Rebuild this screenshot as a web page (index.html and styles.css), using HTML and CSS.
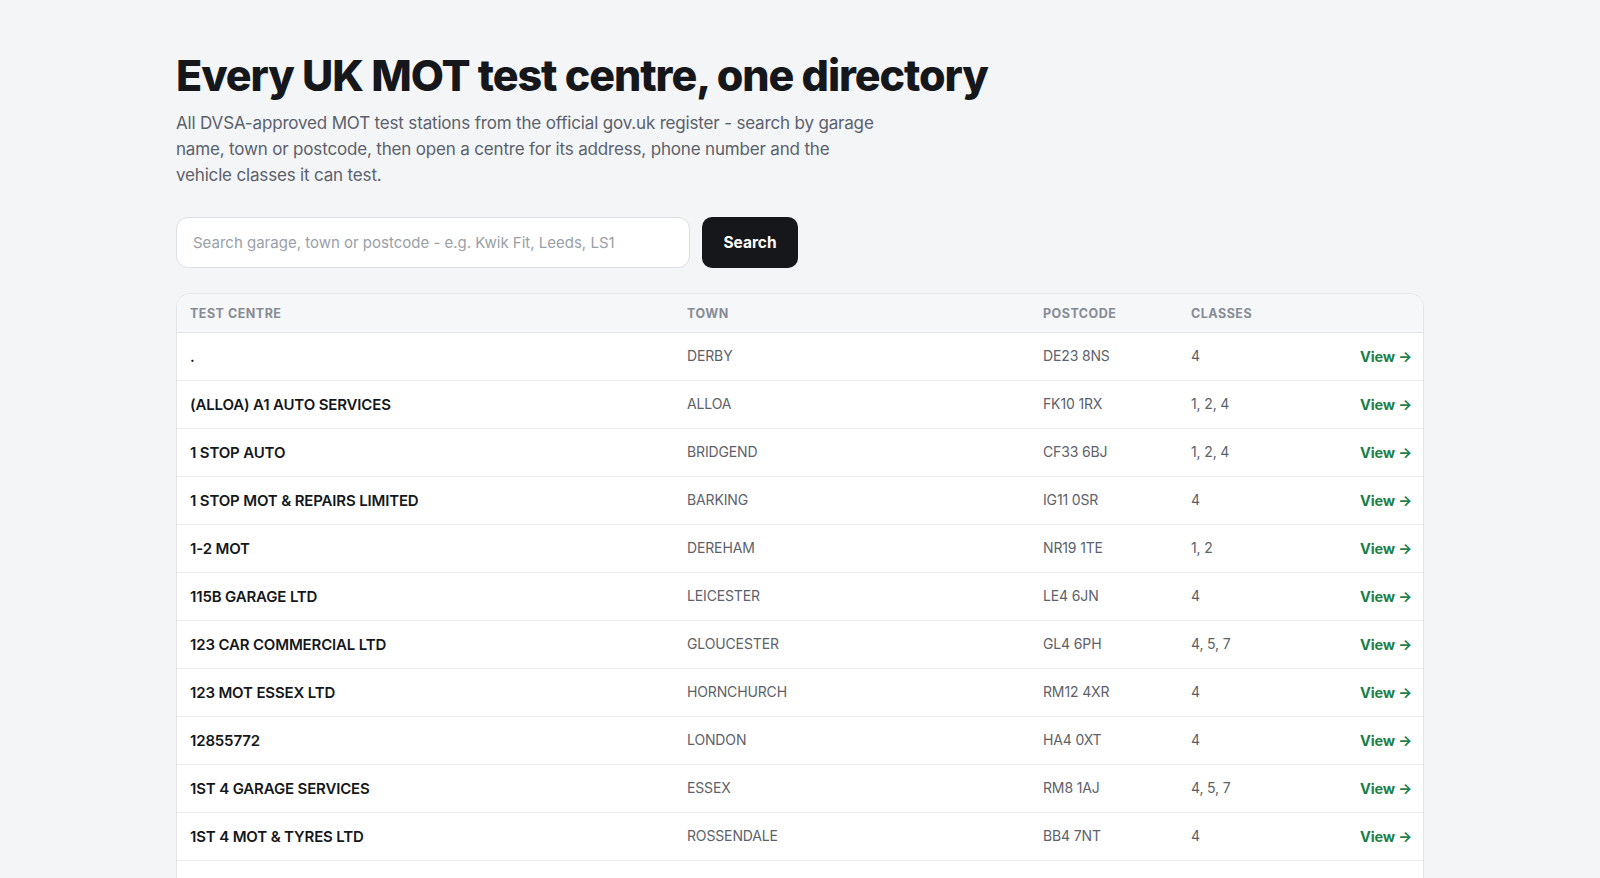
FILE: index.html
```html
<!DOCTYPE html>
<html lang="en">
<head>
    <meta charset="UTF-8">
    <title>MOT Test Centre Directory</title>
    <link rel="stylesheet" href="styles.css">
</head>
<body>

<main class="page">
    <h1 class="title">Every UK MOT test centre, one directory</h1>
    <p class="intro">All DVSA-approved MOT test stations from the official gov.uk register - search by garage name, town or postcode, then open a centre for its address, phone number and the vehicle classes it can test.</p>

    <form class="search" onsubmit="return false">
        <input type="text" class="search-input" placeholder="Search garage, town or postcode - e.g. Kwik Fit, Leeds, LS1">
        <button type="submit" class="search-btn">Search</button>
    </form>

    <div class="table-wrap">
        <table class="centres">
            <colgroup>
                <col class="col-name">
                <col class="col-town">
                <col class="col-postcode">
                <col class="col-classes">
                <col class="col-view">
            </colgroup>
            <thead>
                <tr>
                    <th>Test centre</th>
                    <th>Town</th>
                    <th>Postcode</th>
                    <th>Classes</th>
                    <th></th>
                </tr>
            </thead>
            <tbody>
                <tr><td class="name">.</td><td>DERBY</td><td>DE23 8NS</td><td>4</td><td class="view"><a href="#">View &rarr;</a></td></tr>
                <tr><td class="name">(ALLOA) A1 AUTO SERVICES</td><td>ALLOA</td><td>FK10 1RX</td><td>1, 2, 4</td><td class="view"><a href="#">View &rarr;</a></td></tr>
                <tr><td class="name">1 STOP AUTO</td><td>BRIDGEND</td><td>CF33 6BJ</td><td>1, 2, 4</td><td class="view"><a href="#">View &rarr;</a></td></tr>
                <tr><td class="name">1 STOP MOT &amp; REPAIRS LIMITED</td><td>BARKING</td><td>IG11 0SR</td><td>4</td><td class="view"><a href="#">View &rarr;</a></td></tr>
                <tr><td class="name">1-2 MOT</td><td>DEREHAM</td><td>NR19 1TE</td><td>1, 2</td><td class="view"><a href="#">View &rarr;</a></td></tr>
                <tr><td class="name">115B GARAGE LTD</td><td>LEICESTER</td><td>LE4 6JN</td><td>4</td><td class="view"><a href="#">View &rarr;</a></td></tr>
                <tr><td class="name">123 CAR COMMERCIAL LTD</td><td>GLOUCESTER</td><td>GL4 6PH</td><td>4, 5, 7</td><td class="view"><a href="#">View &rarr;</a></td></tr>
                <tr><td class="name">123 MOT ESSEX LTD</td><td>HORNCHURCH</td><td>RM12 4XR</td><td>4</td><td class="view"><a href="#">View &rarr;</a></td></tr>
                <tr><td class="name">12855772</td><td>LONDON</td><td>HA4 0XT</td><td>4</td><td class="view"><a href="#">View &rarr;</a></td></tr>
                <tr><td class="name">1ST 4 GARAGE SERVICES</td><td>ESSEX</td><td>RM8 1AJ</td><td>4, 5, 7</td><td class="view"><a href="#">View &rarr;</a></td></tr>
                <tr><td class="name">1ST 4 MOT &amp; TYRES LTD</td><td>ROSSENDALE</td><td>BB4 7NT</td><td>4</td><td class="view"><a href="#">View &rarr;</a></td></tr>
                <tr><td class="name">1st Aid 2 Car Repairs Ltd</td><td>STANLEY</td><td>DH9 7PH</td><td>4, 5, 7</td><td class="view"><a href="#">View &rarr;</a></td></tr>
            </tbody>
        </table>
    </div>
</main>

</body>
</html>
```

FILE: styles.css
```css
body {
    margin: 0;
    background: #f4f5f7;
    font-family: Inter, "Noto Sans", sans-serif;
    color: #14161a;
}
.page {
    width: 1248px;
    margin: 0 auto;
    padding-top: 49px;
}
.title {
    margin: 0;
    font-size: 43px;
    font-weight: 800;
    letter-spacing: -0.025em;
    line-height: 52px;
    color: #15171b;
}
.intro {
    margin: 9px 0 0;
    max-width: 710px;
    font-size: 17px;
    line-height: 26px;
    color: #5b616b;
    letter-spacing: -0.01em;
}
.search {
    display: flex;
    gap: 12px;
    margin-top: 29px;
}
.search-input {
    width: 514px;
    height: 51px;
    box-sizing: border-box;
    padding: 0 16px;
    border: 1px solid #dcdfe4;
    border-radius: 12px;
    background: #fff;
    font-family: inherit;
    font-size: 15px;
    color: #14161a;
}
.search-input::placeholder {
    color: #9aa0a8;
}
.search-btn {
    width: 96px;
    height: 51px;
    border: 0;
    border-radius: 10px;
    background: #15171b;
    color: #fff;
    font-family: inherit;
    font-size: 15.5px;
    font-weight: 700;
    cursor: pointer;
}
.table-wrap {
    margin-top: 25px;
    border: 1px solid #e3e5e9;
    border-radius: 14px;
    overflow: hidden;
    background: #fff;
}
.centres {
    width: 100%;
    border-collapse: collapse;
    table-layout: fixed;
}
.col-name { width: 497px; }
.col-town { width: 356px; }
.col-postcode { width: 148px; }
.col-classes { width: 127px; }
.col-view { width: 120px; }
.centres th {
    background: #f6f7f9;
    height: 38px;
    padding: 0 13px;
    text-align: left;
    font-size: 12.5px;
    font-weight: 700;
    letter-spacing: 0.04em;
    text-transform: uppercase;
    color: #878c94;
    border-bottom: 1px solid #e3e5e9;
}
.centres td {
    height: 44px;
    padding: 0 13px 3px;
    font-size: 14px;
    color: #5d626a;
    border-bottom: 1px solid #eceef1;
    letter-spacing: -0.01em;
}
.centres td.name {
    font-size: 15px;
    font-weight: 600;
    color: #15171b;
    padding: 0 13px;
}
.centres td.view {
    text-align: right;
    padding: 0 13px;
}
.view a {
    color: #1b7f46;
    font-weight: 700;
    font-size: 14.5px;
    text-decoration: none;
}
```
